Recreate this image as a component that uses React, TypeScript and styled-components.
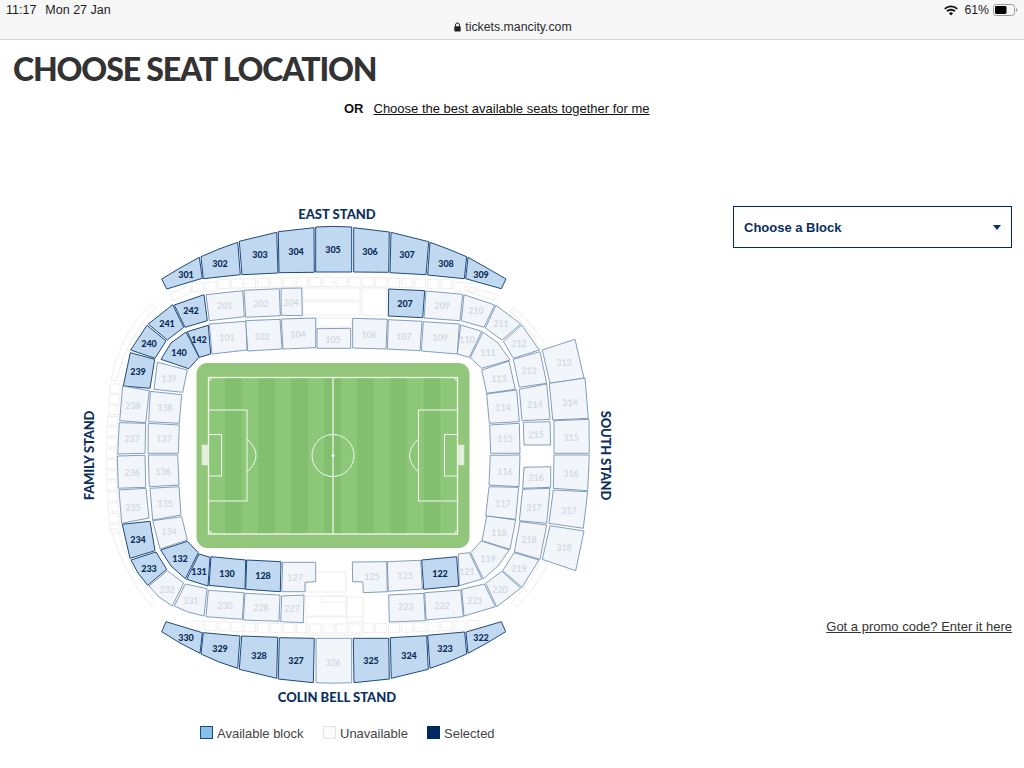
import React from 'react';
import styled, { createGlobalStyle } from 'styled-components';

const Global = createGlobalStyle`
  html, body { margin: 0; padding: 0; background: #fff; }
  body { font-family: "Liberation Sans", Arial, sans-serif; width: 1024px; height: 768px; overflow: hidden; }
`;

const Page = styled.div`display: flex; flex-direction: column; width: 1024px; height: 768px; overflow: hidden;`;
const StatusBar = styled.header`
  height: 39px; background: #f7f7f7; border-bottom: 1px solid #d6d6d6; box-sizing: content-box;
  padding: 0 6px; display: grid; grid-template-columns: 1fr auto 1fr; color: #1c1c1c; font-size: 12.3px;
`;
const StatusLeft = styled.div`display: flex; gap: 9px; padding-top: 3px; line-height: 14px; font-size: 12.5px;`;
const Address = styled.div`display: flex; align-items: center; gap: 4px; padding-top: 20px; height: 14px; font-size: 12.3px; color: #2b2b2b; margin-left: 2px;`;
const StatusRight = styled.div`display: flex; justify-content: flex-end; align-items: flex-start; line-height: 14px; padding-top: 3px;`;
const Wifi = styled.svg`margin: 2px 6px 0 0;`;
const Battery = styled.svg`margin: 1px 0 0 4px;`;
const Title = styled.h1`
  margin: 0; padding: 11px 0 0 13px; height: 51px; box-sizing: content-box; line-height: 36px;
  font-family: Lato, sans-serif; font-weight: 900; font-size: 32px; color: #333333; letter-spacing: -1.15px;
`;
const OrRow = styled.div`display: flex; gap: 10px; padding: 0 0 0 344px; margin-top: -1px; font-size: 13px; line-height: 16px; color: #111;`;
const OrLabel = styled.b`font-weight: 700;`;
const BestLink = styled.a`color: #111; text-decoration: underline;`;
const Main = styled.main`display: flex; margin-top: 83px; padding-left: 80px;`;
const MapColumn = styled.section`display: flex; flex-direction: column; width: 540px;`;
const Map = styled.svg`display: block; width: 540px; height: 510px;`;
const Legend = styled.div`display: flex; padding: 16px 0 0 120px; color: #444; font-size: 13px; line-height: 16px;`;
const LegendItem = styled.div<{ $w: number }>`display: flex; align-items: center; gap: 4px; width: ${p => p.$w}px;`;
const Swatch = styled.span<{ $bg: string; $bd: string }>`
  display: block; width: 13px; height: 13px; box-sizing: border-box; background: ${p => p.$bg}; border: 1px solid ${p => p.$bd}; margin-top: -4px;
`;
const Side = styled.aside`display: flex; flex-direction: column; width: 279px; margin-left: 113px; padding-top: 6px;`;
const BlockSelect = styled.div`
  height: 42px; box-sizing: border-box; border: 1px solid #002a5f; display: flex; align-items: center; justify-content: space-between;
  padding: 0 10px; color: #0a2f63; font-size: 13px; font-weight: 700;
`;
const Caret = styled.span`width: 0; height: 0; border-left: 4.5px solid transparent; border-right: 4.5px solid transparent; border-top: 5px solid #0a2f63;`;
const Promo = styled.a`margin-top: 371px; align-self: flex-end; color: #333; font-size: 13px; line-height: 16px; text-decoration: underline;`;
const BlockLabel = styled.text<{ $on: boolean }>`
  font-family: Lato, sans-serif; font-size: 9px; font-weight: ${p => (p.$on ? 900 : 700)}; fill: ${p => (p.$on ? '#0c2c57' : '#d5d9e2')};
  text-anchor: middle; dominant-baseline: central;
`;
const StandLabel = styled.text<{ $tight?: boolean }>`
  font-family: Lato, sans-serif; font-size: 13px; font-weight: 900; fill: #0b2f5e; text-anchor: middle; dominant-baseline: central;
  letter-spacing: ${p => (p.$tight ? '-0.2px' : '0')};
`;

type B = [string, string, number, number];
const on = new Set(['301','302','303','304','305','306','307','308','309','242','241','240','239','207','142','140','234','233','132','131','130','128','122','330','329','328','327','325','324','323','322']);

const blocks: B[] = [
['301','161.7,279 180,268 199.3,257.3 202.3,278.3 166.7,289',186,274],
['302','201,256.7 219,249 237.7,242.3 240.3,274.7 203.3,278.7',220,263],
['303','239.3,241.3 276.7,232.3 278,273 242,274.7',260,254],
['304','278.3,231.7 314,227.7 314.3,272.3 279,272.7',296,251],
['305','315.7,227 333,226.4 351.7,227 351.7,272 315.7,272',333,249],
['306','353.7,227.7 389.3,232 388.7,272.3 353.7,272',370,251],
['307','391,232.3 428.7,241.7 426,274.7 390,272.7',407,254],
['308','430,242.3 448,249 466.7,256.7 464.3,278.7 427.7,275',446,263],
['309','468,257.3 487,268 506,279 501.3,288.7 465.7,278.7',481,274],
['242','174.3,305 204,294.7 207.3,320.7 185,327.3',191,310],
['201','206,294.7 242.7,290.7 244.3,316.7 209.3,320.7',225,305],
['202','244,290.3 279.3,288.7 280.3,315.7 245.7,317.3',261,303],
['204','281,288.3 301.7,288 302.3,315.7 281.3,315.3',291,302],
['241','148.3,324 172.7,304.7 183.7,327.3 167.3,340',167,323],
['240','130.7,350 147,325.3 166,341 155,358.3',149,343],
['239','123.3,386 130.3,352.7 154.7,359.3 150,388.3',138,371],
['238','119.7,420.7 122.7,386 149.3,390.7 145.7,422.7',133,405],
['237','117.7,454 119.3,422.7 145.7,423.3 145,453.3',132,438],
['236','118.3,488.3 117.3,456 145,455.3 145.7,487.3',132,472],
['235','121.7,523.3 119,490 146,488.3 149,518',133,507],
['234','122.3,524.3 150,521.3 155,550.7 130,558.3',138,539],
['233','131,560 156,552 166.7,569.3 147.7,585.3 138,573',149,568],
['232','149,586 167.3,570.7 183.7,583 172.3,606 159,597',167,589],
['231','174.3,606 185.3,584 207,588.7 204,616 188,612',191,600],
['230','206,616.7 208.3,590.3 244,592.7 242.3,619.3',225,605],
['228','243.3,620 245,593.3 280,595 279,621.3',261,607],
['227','280.7,621.7 281.7,596 304,595 303.3,622.7',292,608],
['142','187.3,331.7 208.3,325.3 210.7,354 199.3,357.3',199,339],
['101','209.3,324 246,321.3 247,350 212,354',227,337],
['102','245.7,320.7 280,319.3 282,349 247.7,351',262,336],
['104','281.3,319 315.7,318 315.7,347.7 283,349',298,334],
['105','317,328.7 350.7,328.3 350.7,348.3 317,348.3',333,339],
['106','352.7,318.3 387.3,319.3 386,349 352.7,348',369,334],
['107','388.3,319.7 422,321.3 420,350.7 387.3,349',404,336],
['109','423.3,321.7 459.3,324 457.3,354 421.3,351',440,337],
['110','460.7,325 481.7,331.3 469.3,357.3 457.3,354',467,339],
['111','483,332 498,343 510,360 481.7,368.3 470.3,357.7',488,352],
['113','481.7,370 509,361 515.3,389.3 486.7,393.3',499,378],
['114','486.7,394 516.7,390 519.3,421.7 489.3,423.3',503,407],
['115','489.7,425 519.3,423.3 520,453.3 490.7,453.3',505,438],
['116','490.3,455.3 520,455 519,486.7 489,485',505,471],
['117','489,486.7 518.7,487.3 515.7,519.3 485.7,516',503,503],
['118','486.7,516 515.7,520 510,549.3 482,540.7',499,532],
['119','481.3,541 509.3,550 498,566 483.3,579 470.7,552.7',488,558],
['121','458.3,554 469.3,552.7 482,579 459.3,585.7',467,571],
['122','421.7,560 456.7,556.7 458.7,586 423.7,589.3',440,573],
['123','387.3,561.7 420.7,560.3 422.3,589 388.3,591.3',405,575],
['125','352.3,562 386.7,561.7 387.3,591.7 363.3,592.7 362.7,582 352.7,581.7',372,576],
['128','246.7,560 281,561.7 280.3,591.7 245.7,589.3',263,575],
['130','211,556.7 245.7,560 245,589 209,585.3',227,573],
['131','199,554 210,557.3 208,586 186.7,579.3',199,571],
['132','160.7,550 187.3,541.3 198.3,552.7 185.3,578.7 171,566',180,558],
['127','282.7,562.3 315.7,562.3 315.7,581.7 305,582.3 305,591.7 281.7,591.7',295,577],
['134','152.7,520.7 181.7,516.7 187.3,540 160,549',169,531],
['135','150,488.3 179,486.7 181,515 152.7,520',165,503],
['136','148.3,455 177.7,455 179,485 149.3,486.7',163,471],
['137','148.3,423.3 179.3,425 178.3,453.3 148,453.3',164,438],
['138','150.3,391.3 181.7,394.7 179.3,423.3 148.7,421.7',165,407],
['139','157.3,362.3 187.3,370 182.7,392.3 154,389.3',169,378],
['140','186,332 199,357.3 188.7,368.7 161,359.3 171,343',179,352],
['207','388.7,289 424.7,290.7 422.7,317.7 388.3,316',405,303],
['209','426,291 462.7,294.3 460,320.7 424,318',442,305],
['210','464,294.7 494.7,305 484,327.3 461.3,320.7',476,310],
['211','496,305.3 520.7,324 502,340 485.3,328',501,323],
['212','521.7,325 539.3,350 513.3,358.3 503.3,341.3',519,343],
['213','540,351.7 546.7,383.3 519.3,387.3 513.3,359.3',529,370],
['214','519.3,389.3 546.7,384 550,419.3 522,420.7',535,404],
['215','523.3,422.3 550,421.7 550.7,445 524,445',536,434],
['216','524,467.3 550.7,466.7 550.7,487.3 522.7,488.3',536,477],
['217','522.7,489.3 550,488.3 546.7,523.3 519.3,520.7',534,507],
['218','520,521.7 546.7,525 540,559.3 514.3,551.7',529,539],
['219','514,552.7 539,560 522,587.3 502.7,570.7',519,568],
['220','501.7,571.3 520.7,588 496.7,606.7 485.7,583.3',500,589],
['221','484.3,584 495.3,606.7 464,616 461.7,589.3',475,600],
['222','460.7,590 463.3,616.7 426,620 424.7,592.7',442,605],
['223','423.7,593.3 425.3,620.7 389.3,622 388.7,595',406,606],
['313','542.3,350 575,339.3 584,378.3 550,383.3',564,362],
['314','549.3,383.3 585,378 588.3,418.3 552.7,420',570,402],
['315','554,420.7 589,419.3 589.3,453.3 554,453.3',571,437],
['316','554,455 589.3,455 587.7,490.7 553.3,488.3',571,473],
['317','553.3,490 587.7,491.7 583.3,528.3 549,523.3',569,510],
['318','550,525.7 584,531 575.7,570.7 542.3,559.3',564,547],
['330','166,621.7 202.3,632.7 200,653.3 180,643 161.7,631.7',186,637],
['329','203.3,632.7 240,636 237.7,668.3 219,662 201,654',220,648],
['328','241.7,636 277.7,637.3 276.7,678.3 239.3,669.3',259,655],
['327','279.3,637.7 314.3,638.3 313.3,682.7 278.3,679',296,660],
['326','316,638.3 351.7,638.3 351.7,682.7 333,683.2 316,682.7',333,662],
['325','353.3,638.3 388.7,638.3 389.3,679 354,682.7',371,660],
['324','390.3,637.7 426.7,635.7 428.3,669.3 391.3,678.3',409,655],
['323','427.7,635.3 464.7,632 466.7,654 448,662 430,668.3',445,648],
['322','466,632 501.3,621.7 505.7,631.7 487,643 468,653.3',481,637],
] as unknown as B[];

const topSeats = Array.from({ length: 22 }, (_, i) => {
  const x = 192 + i * 13.1;
  const d = (x + 6 - 333) / 150;
  return { x, y: 277.5 + d * d * 4 + (i < 2 || i > 19 ? 2 : 0) };
});
const bottomSeats = Array.from({ length: 22 }, (_, i) => {
  const x = 192 + i * 13.1;
  const d = (x + 6 - 333) / 150;
  return { x, y: 624 - d * d * 4 };
});
const leftSeats = Array.from({ length: 14 }, (_, i) => {
  const y = 384 + i * 10.8;
  const d = (y - 455) / 75;
  return { x: 106.5 + d * d * 4, y };
});

const stripes = [225, 258.3, 291.3, 324.3, 357.3, 390.3, 423.7];

const Ghost = () => (
  <g fill="none" stroke="#eeeeee" strokeWidth="1">
    {topSeats.concat(bottomSeats).map((s, i) => <rect key={i} x={s.x} y={s.y} width="11" height="9" />)}
    {leftSeats.map((s, i) => <rect key={i} x={s.x} y={s.y} width="10" height="9" />)}
    <path d="M152 303 Q122 330 111 380 L116 381 Q128 334 156 308 Z" />
    <path d="M170 294 L190 285 L192 292 L173 301 Z" />
    <path d="M111 528 Q122 572 151 606 L155 602 Q128 568 117 530 Z" />
    <path d="M513 307 Q535 325 547 348 L541 350 Q530 328 510 311 Z" />
    <path d="M548 563 Q536 588 517 607 L511 603 Q529 584 542 561 Z" />
    <path d="M470 287 L498 295 L494 300 L468 292 Z" />
    <rect x="303" y="288" width="57" height="12" />
    <rect x="303" y="302" width="57" height="13" />
    <rect x="362" y="288" width="24" height="27" />
    <rect x="306" y="572" width="40" height="20" />
    <rect x="322" y="596" width="24" height="6" />
    <rect x="306" y="596" width="40" height="20" />
    <rect x="347" y="597" width="16" height="25" />
    <rect x="306" y="617" width="57" height="18" />
    <path d="M317 318 H351 V327 H317 Z" />
  </g>
);

const Pitch = () => (
  <g>
    <rect x="196.5" y="363" width="273" height="185" rx="11" fill="#92c77b" />
    <rect x="208" y="377" width="250" height="157" fill="#8cc877" />
    {stripes.map(x => <rect key={x} x={x} y="377" width="16.6" height="157" fill="#82bf6e" />)}
    <g fill="none" stroke="#f4f8f1" strokeWidth="1">
      <rect x="208.5" y="377.5" width="249" height="156.5" strokeWidth="1.3" />
      <line x1="333" y1="377" x2="333" y2="534" strokeWidth="1.2" />
      <circle cx="333" cy="455.5" r="21" />
      <rect x="208.5" y="410" width="38.5" height="91" />
      <rect x="208.5" y="434.5" width="13" height="41.5" />
      <rect x="418.5" y="410" width="39" height="91" />
      <rect x="444.5" y="434.500" width="13" height="41.5" />
      <path d="M247 439 Q265 455.5 247 472" />
      <path d="M418.5 439 Q400.5 455.5 418.5 472" />
      <path d="M208.5 380.500a3 3 0 003-3M454.500 377.500a3 3 0 003 3M208.500 531a3 3 0 013 3M454.500 534a3 3 0 013-3" />
    </g>
    <circle cx="333" cy="455.5" r="1.6" fill="#fff" />
    <rect x="202" y="445" width="6" height="20" fill="#e4eedd" stroke="#d7e6cc" strokeWidth=".6" />
    <rect x="458" y="445" width="6" height="20" fill="#e4eedd" stroke="#d7e6cc" strokeWidth=".6" />
  </g>
);

export default function App() {
  return (
    <Page>
      <Global />
      <StatusBar>
        <StatusLeft><span>11:17</span><span>Mon 27 Jan</span></StatusLeft>
        <Address>
          <svg width="7" height="10" viewBox="0 0 7 10"><path d="M1.5 4.500V3a2 2 0 014 0v1.500" fill="none" stroke="#222" strokeWidth="1" /><rect x="0.3" y="4.3" width="6.4" height="5.2" rx=".8" fill="#222" /></svg>
          <span>tickets.mancity.com</span>
        </Address>
        <StatusRight>
          <Wifi width="14" height="11" viewBox="0 0 14 11"><path d="M7 10.5L4.9 8.2a3 3 0 014.2 0zM3.7 7L2.4 5.6a6.6 6.6 0 019.2 0L10.3 7a4.7 4.7 0 00-6.6 0zM1.4 4.6L.1 3.2a10 10 0 0113.800 0l-1.3 1.4a8 8 0 00-11.2 0z" fill="#111" /></Wifi>
          <span>61%</span>
          <Battery width="25" height="12" viewBox="0 0 25 12"><rect x=".5" y=".5" width="21" height="11" rx="2.8" fill="none" stroke="#9a9a9a" /><rect x="2" y="2" width="11.5" height="8" rx="1.4" fill="#000" /><path d="M23 4v4c.8-.3 1.300-1 1.300-2S23.800 4.300 23 4z" fill="#9a9a9a" /></Battery>
        </StatusRight>
      </StatusBar>
      <Title>CHOOSE SEAT LOCATION</Title>
      <OrRow><OrLabel>OR</OrLabel><BestLink>Choose the best available seats together for me</BestLink></OrRow>
      <Main>
        <MapColumn>
          <Map viewBox="80 200 540 510">
            <Ghost />
            {blocks.map(([id, pts]) => (
              <polygon key={id} points={pts} fill={on.has(id) ? '#c0d9f1' : '#f2f6fb'} stroke={on.has(id) ? '#1f4a7c' : '#6685aa'} strokeWidth={on.has(id) ? 1 : 0.8} strokeLinejoin="round" />
            ))}
            <Pitch />
            {blocks.map(([id, , x, y]) => <BlockLabel key={id} x={x} y={y} $on={on.has(id)}>{id}</BlockLabel>)}
            <StandLabel x="337" y="214">EAST STAND</StandLabel>
            <StandLabel x="337" y="697">COLIN BELL STAND</StandLabel>
            <StandLabel $tight x="89" y="455.500" transform="rotate(-90 89 455.500)">FAMILY STAND</StandLabel>
            <StandLabel $tight x="606" y="455.500" transform="rotate(90 606 455.500)">SOUTH STAND</StandLabel>
          </Map>
          <Legend>
            <LegendItem $w={123}><Swatch $bg="#88c0ec" $bd="#1f4a7c" />Available block</LegendItem>
            <LegendItem $w={104}><Swatch $bg="#fbfbfb" $bd="#e3e3e3" />Unavailable</LegendItem>
            <LegendItem $w={80}><Swatch $bg="#002a5f" $bd="#002a5f" />Selected</LegendItem>
          </Legend>
        </MapColumn>
        <Side>
          <BlockSelect>Choose a Block<Caret /></BlockSelect>
          <Promo>Got a promo code? Enter it here</Promo>
        </Side>
      </Main>
    </Page>
  );
}
